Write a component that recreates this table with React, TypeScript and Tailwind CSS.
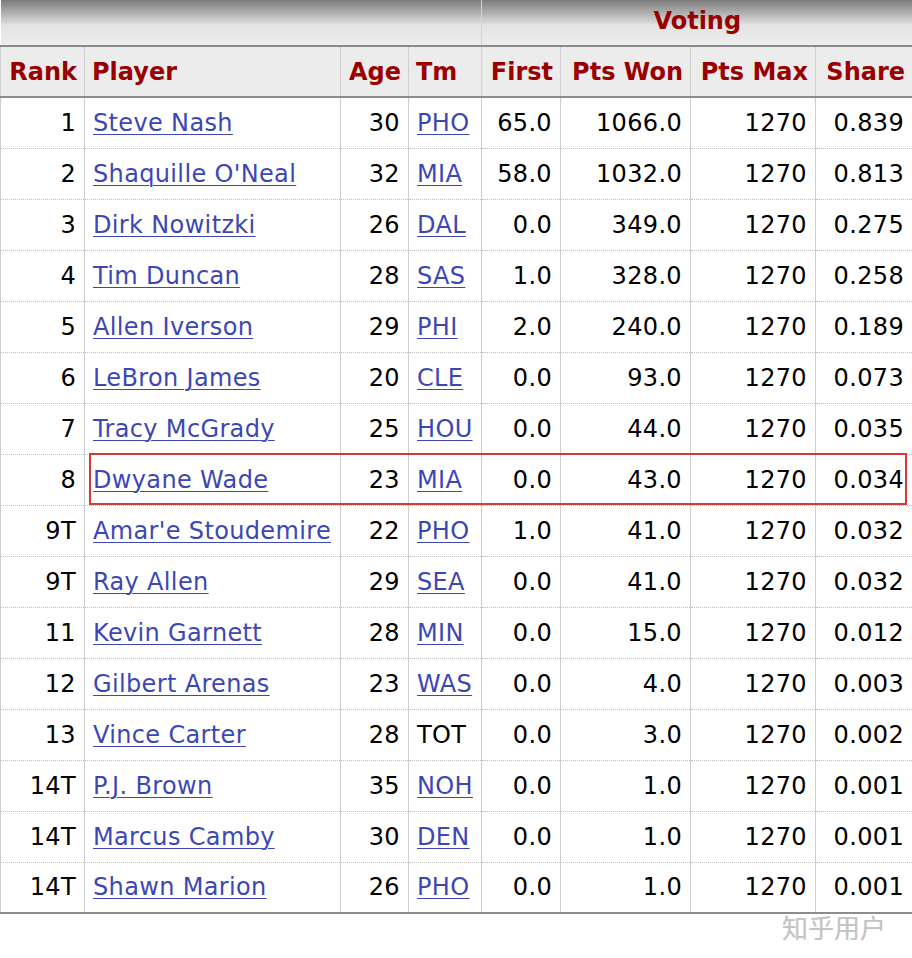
const ROWS: [string, string, string, string | null, string, string, string, string][] = [
  ["1", "Steve Nash", "30", "PHO", "65.0", "1066.0", "1270", "0.839"],
  ["2", "Shaquille O'Neal", "32", "MIA", "58.0", "1032.0", "1270", "0.813"],
  ["3", "Dirk Nowitzki", "26", "DAL", "0.0", "349.0", "1270", "0.275"],
  ["4", "Tim Duncan", "28", "SAS", "1.0", "328.0", "1270", "0.258"],
  ["5", "Allen Iverson", "29", "PHI", "2.0", "240.0", "1270", "0.189"],
  ["6", "LeBron James", "20", "CLE", "0.0", "93.0", "1270", "0.073"],
  ["7", "Tracy McGrady", "25", "HOU", "0.0", "44.0", "1270", "0.035"],
  ["8", "Dwyane Wade", "23", "MIA", "0.0", "43.0", "1270", "0.034"],
  ["9T", "Amar'e Stoudemire", "22", "PHO", "1.0", "41.0", "1270", "0.032"],
  ["9T", "Ray Allen", "29", "SEA", "0.0", "41.0", "1270", "0.032"],
  ["11", "Kevin Garnett", "28", "MIN", "0.0", "15.0", "1270", "0.012"],
  ["12", "Gilbert Arenas", "23", "WAS", "0.0", "4.0", "1270", "0.003"],
  ["13", "Vince Carter", "28", null, "0.0", "3.0", "1270", "0.002"],
  ["14T", "P.J. Brown", "35", "NOH", "0.0", "1.0", "1270", "0.001"],
  ["14T", "Marcus Camby", "30", "DEN", "0.0", "1.0", "1270", "0.001"],
  ["14T", "Shawn Marion", "26", "PHO", "0.0", "1.0", "1270", "0.001"],
];

const th = "border-x border-[#cfcfcf] px-[7px] whitespace-nowrap tracking-normal font-bold text-[#990000]";
const td = "border-x border-[#cfcfcf] px-[8px] whitespace-nowrap";
const link = "text-[#3d47b4] underline underline-offset-[3px] decoration-1";

export default function App() {
  return (
    <div className="min-h-screen w-[912px] bg-white font-['DejaVu_Sans',sans-serif] text-[24px] leading-none tracking-[0.35px] text-black">
      <div className="relative">
        <table className="w-[912px] table-fixed border-collapse">
          <colgroup>
            <col className="w-[84px]" />
            <col className="w-[256px]" />
            <col className="w-[68px]" />
            <col className="w-[73px]" />
            <col className="w-[79px]" />
            <col className="w-[130px]" />
            <col className="w-[125px]" />
            <col className="w-[97px]" />
          </colgroup>
          <thead>
            <tr className="h-[46px] bg-linear-to-b from-[#7c7c7c] via-[#e3e3e3] via-55% to-[#ededed]">
              <th colSpan={4} className="border-r border-[#d4d4d4]" />
              <th colSpan={4} className="pb-[4px] text-center font-bold tracking-normal text-[#990000]">
                Voting
              </th>
            </tr>
            <tr className="h-[51px] border-y-2 border-[#8c8c8c] bg-[#ececec]">
              <th className={`${th} text-right`}>Rank</th>
              <th className={`${th} text-left`}>Player</th>
              <th className={`${th} text-right`}>Age</th>
              <th className={`${th} text-left`}>Tm</th>
              <th className={`${th} text-right`}>First</th>
              <th className={`${th} text-right`}>Pts Won</th>
              <th className={`${th} text-right`}>Pts Max</th>
              <th className={`${th} text-right`}>Share</th>
            </tr>
          </thead>
          <tbody className="border-b-2 border-[#8c8c8c]">
            {ROWS.map((r, i) => (
              <tr
                key={i}
                className="h-[51px] border-t border-dotted border-[#bdbdbd] first:border-t-0"
              >
                <td className={`${td} text-right`}>{r[0]}</td>
                <td className={`${td} text-left`}>
                  <a href="#" className={link}>
                    {r[1]}
                  </a>
                </td>
                <td className={`${td} text-right`}>{r[2]}</td>
                <td className={`${td} text-left`}>
                  {r[3] ? (
                    <a href="#" className={link}>
                      {r[3]}
                    </a>
                  ) : (
                    "TOT"
                  )}
                </td>
                <td className={`${td} text-right`}>{r[4]}</td>
                <td className={`${td} text-right`}>{r[5]}</td>
                <td className={`${td} text-right`}>{r[6]}</td>
                <td className={`${td} text-right`}>{r[7]}</td>
              </tr>
            ))}
          </tbody>
        </table>
        {/* highlight box around Dwyane Wade */}
        <div className="pointer-events-none absolute left-[89px] top-[453px] h-[52px] w-[818px] border-2 border-[#d63a36]" />
      </div>
      <div className="flex justify-end pr-[26px]">
        <span className="font-['Noto_Sans_CJK_SC',sans-serif] text-[26px] tracking-normal text-[#c4c4c4] [text-shadow:0_0_1px_#e0e0e0]">
          知乎用户
        </span>
      </div>
    </div>
  );
}
